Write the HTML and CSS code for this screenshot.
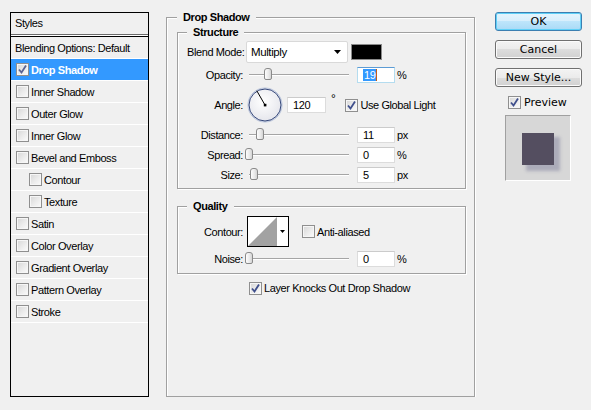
FILE: index.html
```html
<!DOCTYPE html>
<html>
<head>
<meta charset="utf-8">
<title>Layer Style</title>
<link rel="stylesheet" href="styles.css">
</head>
<body>
<div class="dialog">
  <aside class="styles-panel">
    <div class="styles-head">Styles</div>
    <ul class="styles-list">
      <li class="row plain">Blending Options: Default</li>
      <li class="row selected"><span class="cb"><svg viewBox="0 0 11 11" width="11" height="11"><polyline points="2,5.5 4.5,8.5 9,1.5" fill="none" stroke="#5a6494" stroke-width="1.8"/></svg></span>Drop Shadow</li>
      <li class="row"><span class="cb"></span>Inner Shadow</li>
      <li class="row"><span class="cb"></span>Outer Glow</li>
      <li class="row"><span class="cb"></span>Inner Glow</li>
      <li class="row"><span class="cb"></span>Bevel and Emboss</li>
      <li class="row sub"><span class="cb"></span>Contour</li>
      <li class="row sub"><span class="cb"></span>Texture</li>
      <li class="row"><span class="cb"></span>Satin</li>
      <li class="row"><span class="cb"></span>Color Overlay</li>
      <li class="row"><span class="cb"></span>Gradient Overlay</li>
      <li class="row"><span class="cb"></span>Pattern Overlay</li>
      <li class="row"><span class="cb"></span>Stroke</li>
    </ul>
  </aside>

  <fieldset class="group outer">
    <legend>Drop Shadow</legend>
    <fieldset class="group inner structure">
      <legend>Structure</legend>
      <div class="form structure-form">
        <span class="lbl">Blend Mode:</span>
        <div class="ctl">
          <div class="select">Multiply<svg class="arrow" width="7" height="4" viewBox="0 0 7 4"><polygon points="0,0 7,0 3.5,4" fill="#000"/></svg></div>
          <div class="swatch"></div>
        </div>

        <span class="lbl">Opacity:</span>
        <div class="ctl">
          <div class="slider"><div class="thumb" style="left:19px"></div></div>
          <div class="field focus"><span class="hl">19</span><span class="caret"></span></div>
          <span class="unit">%</span>
        </div>

        <span class="lbl">Angle:</span>
        <div class="ctl">
          <svg class="dial" width="36" height="36" viewBox="0 0 36 36">
            <defs>
              <radialGradient id="dg" cx="45%" cy="40%" r="65%">
                <stop offset="0" stop-color="#ffffff"/>
                <stop offset="1" stop-color="#e2e3ea"/>
              </radialGradient>
            </defs>
            <circle cx="18" cy="18" r="17" fill="url(#dg)" stroke="#b8c4dc" stroke-width="1"/>
            <circle cx="18" cy="18" r="16" fill="none" stroke="#34477a" stroke-width="1"/>
            <line x1="18" y1="18" x2="9.8" y2="3.8" stroke="#000" stroke-width="1"/>
            <rect x="16.8" y="16.8" width="2.6" height="2.6" fill="#000"/>
          </svg>
          <div class="field angle">120</div>
          <span class="deg">°</span>
          <span class="check"><span class="cb"><svg viewBox="0 0 11 11" width="11" height="11"><polyline points="2,5.5 4.5,8.5 9,1.5" fill="none" stroke="#3f4f8c" stroke-width="1.8"/></svg></span>Use Global Light</span>
        </div>

        <span class="lbl">Distance:</span>
        <div class="ctl">
          <div class="slider"><div class="thumb" style="left:11px"></div></div>
          <div class="field">11</div>
          <span class="unit">px</span>
        </div>

        <span class="lbl">Spread:</span>
        <div class="ctl">
          <div class="slider"><div class="thumb" style="left:0px"></div></div>
          <div class="field">0</div>
          <span class="unit">%</span>
        </div>

        <span class="lbl">Size:</span>
        <div class="ctl">
          <div class="slider"><div class="thumb" style="left:5px"></div></div>
          <div class="field">5</div>
          <span class="unit">px</span>
        </div>
      </div>
    </fieldset>

    <fieldset class="group inner quality">
      <legend>Quality</legend>
      <div class="form quality-form">
        <span class="lbl">Contour:</span>
        <div class="ctl">
          <div class="contour">
            <svg width="29" height="29" viewBox="0 0 29 29"><polygon points="0,29 29,0 29,29" fill="#a2a2a2"/></svg>
            <span class="contour-drop"><svg width="5" height="3" viewBox="0 0 5 3"><polygon points="0,0 5,0 2.5,3" fill="#000"/></svg></span>
          </div>
          <span class="check aa"><span class="cb"></span>Anti-aliased</span>
        </div>

        <span class="lbl">Noise:</span>
        <div class="ctl">
          <div class="slider"><div class="thumb" style="left:0px"></div></div>
          <div class="field">0</div>
          <span class="unit">%</span>
        </div>
      </div>
    </fieldset>

    <div class="check knock"><span class="cb"><svg viewBox="0 0 11 11" width="11" height="11"><polyline points="2,5.5 4.5,8.5 9,1.5" fill="none" stroke="#3f4f8c" stroke-width="1.8"/></svg></span>Layer Knocks Out Drop Shadow</div>
  </fieldset>

  <div class="side">
    <button class="btn default">OK</button>
    <button class="btn">Cancel</button>
    <button class="btn">New Style...</button>
    <div class="check preview-check"><span class="cb"><svg viewBox="0 0 11 11" width="11" height="11"><polyline points="2,5.5 4.5,8.5 9,1.5" fill="none" stroke="#3f4f8c" stroke-width="1.8"/></svg></span>Preview</div>
    <div class="preview"><div class="preview-square"></div></div>
  </div>
</div>
</body>
</html>
```

FILE: styles.css
```css
html, body {
  margin: 0;
  padding: 0;
  background: #f0f0f0;
}

body {
  font-family: "Liberation Sans", Arial, sans-serif;
  font-size: 11px;
  letter-spacing: -0.4px;
  color: #000;
}

.dialog {
  display: flex;
  align-items: flex-start;
}

/* ---------- left styles list ---------- */
.styles-panel {
  box-sizing: border-box;
  width: 139px;
  height: 385px;
  margin: 12px 0 0 10px;
  border: 1px solid #000;
  display: flex;
  flex-direction: column;
}

.styles-head {
  height: 21px;
  line-height: 21px;
  padding-left: 4px;
  border-bottom: 1px solid #6a6a6a;
  box-shadow: 0 1px 0 #fff;
}

.styles-list {
  list-style: none;
  margin: 1px 0 0;
  padding: 0;
  border-top: 1px solid #000;
  flex: 1;
}

.row {
  height: 21px;
  border-bottom: 1px solid #fff;
  display: flex;
  align-items: center;
  gap: 2px;
  padding-left: 5px;
  white-space: nowrap;
}

.row.plain { padding-left: 4px; }
.row.sub { padding-left: 18px; }

.row.selected {
  background: #3399ff;
  color: #fff;
  font-weight: bold;
}

/* ---------- checkbox ---------- */
.cb {
  box-sizing: border-box;
  flex: none;
  width: 13px;
  height: 13px;
  border: 1px solid #8f8f8f;
  background: linear-gradient(135deg, #d6d6d6 0%, #ececec 55%, #fbfbfb 100%);
  box-shadow: inset 0 0 0 1px #f6f6f6;
  display: inline-flex;
  align-items: center;
  justify-content: center;
}

.cb svg { display: block; }

.check {
  display: inline-flex;
  align-items: center;
  gap: 2px;
  white-space: nowrap;
}

/* ---------- group boxes ---------- */
.group {
  margin: 0;
  min-inline-size: 0;
  border: 1px solid #a0a0a0;
  box-shadow: inset 1px 1px 0 #fff, 1px 1px 0 #fff;
}

.group > legend {
  padding: 0 6px;
  line-height: 12px;
  font-weight: bold;
  background: #f0f0f0;
}

.outer {
  box-sizing: border-box;
  width: 309px;
  height: 386px;
  margin: 11px 0 0 17px;
  padding: 3px 8px 0 10px;
}

.inner {
  padding: 3px 0 5px 9px;
}

.quality {
  margin-top: 11px;
  padding: 4px 0 6px 9px;
}

/* ---------- form grid ---------- */
.form {
  display: grid;
  grid-template-columns: 56px auto;
  column-gap: 4px;
  row-gap: 4px;
  align-items: center;
}

.structure-form {
  grid-template-rows: 22px 16px 36px 16px 16px 16px;
}

.quality-form {
  grid-template-rows: 31px 16px;
}

.lbl {
  text-align: right;
  white-space: nowrap;
}

.ctl {
  display: flex;
  align-items: center;
  height: 100%;
}

.select {
  box-sizing: border-box;
  width: 102px;
  height: 22px;
  margin-left: -1px;
  padding: 0 4px 0 4px;
  background: #fff;
  border: 1px solid #d9d9d9;
  border-radius: 2px;
  display: flex;
  align-items: center;
  justify-content: space-between;
  font-size: 11.5px;
}

.select .arrow { margin-right: 2px; }

.swatch {
  box-sizing: border-box;
  width: 31px;
  height: 16px;
  margin-left: 3px;
  background: #000;
  border: 1px solid #8a8a8a;
}

.slider {
  position: relative;
  width: 100px;
  height: 16px;
  margin-left: 2px;
  flex: none;
}

.slider::before {
  content: "";
  position: absolute;
  left: 0;
  right: 0;
  top: 7px;
  border-top: 1px solid #a5a5a5;
  border-bottom: 1px solid #fff;
}

.thumb {
  position: absolute;
  top: 1px;
  box-sizing: border-box;
  width: 8px;
  height: 12px;
  margin-left: -4px;
  border: 1px solid #8a8a8a;
  border-radius: 3px 3px 2px 2px;
  background: linear-gradient(90deg, #fdfdfd 0%, #e9e9e9 60%, #d4d4d4 100%);
}

.field {
  box-sizing: border-box;
  width: 38px;
  height: 16px;
  margin-left: 8px;
  padding-left: 5px;
  background: #fff;
  border: 1px solid #dcdcdc;
  border-top-color: #cbcbcb;
  display: flex;
  align-items: center;
  flex: none;
}

.field.focus {
  border-color: #b4dcef;
  border-top-color: #5c9bd4;
  padding-left: 5px;
}

.hl {
  background: #3399ff;
  color: #fff;
  padding: 0 1px;
  line-height: 12px;
}

.caret {
  width: 1px;
  height: 12px;
  background: #c0601a;
}

.unit {
  margin-left: 2px;
}

.dial {
  display: block;
  flex: none;
}

.field.angle {
  width: 39px;
  margin-left: 4px;
}

.deg {
  margin-left: 5px;
  align-self: flex-start;
  margin-top: 5px;
  font-size: 12px;
}

.ctl .check {
  margin-left: 10px;
  gap: 2px;
}

.contour {
  box-sizing: border-box;
  width: 42px;
  height: 31px;
  border: 1px solid #000;
  background: #fff;
  display: flex;
  align-items: flex-end;
  flex: none;
}

.contour > svg { display: block; }

.contour-drop {
  flex: 1;
  height: 100%;
  display: flex;
  align-items: center;
  justify-content: center;
}

.contour-drop svg { display: block; }

.ctl .check.aa { margin-left: 13px; }

.knock {
  display: flex;
  height: 14px;
  margin: 7px 0 0 72px;
}

/* ---------- right column ---------- */
.side {
  width: 87px;
  margin: 12px 0 0 20px;
  display: flex;
  flex-direction: column;
  font-family: "DejaVu Sans", Verdana, sans-serif;
  letter-spacing: 0;
}

.btn {
  box-sizing: border-box;
  width: 87px;
  height: 19px;
  margin: 0 0 9px;
  padding: 0;
  border: 1px solid #707070;
  border-radius: 3px;
  background: linear-gradient(#f3f3f3 0%, #ebebeb 50%, #dddddd 50%, #d1d1d1 100%);
  box-shadow: inset 0 0 0 1px #fbfbfb;
  font-family: "DejaVu Sans", Verdana, sans-serif;
  font-size: 11px;
  color: #000;
  line-height: 16px;
}

.btn.default {
  border-color: #3c7fb1;
  background: linear-gradient(#e6f5fd 0%, #d6eefc 50%, #bde5fb 50%, #a9daf6 100%);
  box-shadow: inset 0 0 0 1px #5fd0f7;
}

.preview-check {
  height: 13px;
  margin: 0 0 6px 13px;
  gap: 3px;
  font-size: 11px;
}

.preview {
  box-sizing: border-box;
  width: 66px;
  height: 66px;
  margin-left: 10px;
  background: #d7d7d7;
  border: 1px solid;
  border-color: #a0a0a0 #fff #fff #a0a0a0;
  padding: 17px 0 0 16px;
}

.preview-square {
  width: 32px;
  height: 32px;
  background: #544e60;
  box-shadow: 5px 5px 3px 1px rgba(120, 120, 150, 0.45);
}
```
